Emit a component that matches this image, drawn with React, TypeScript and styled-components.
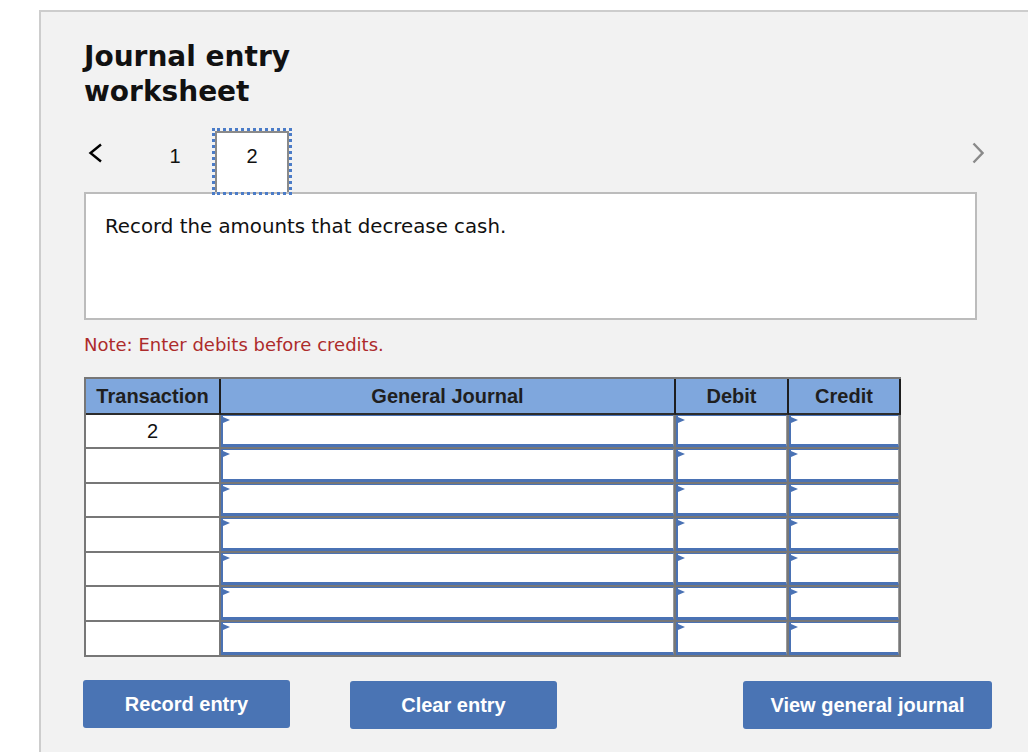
import styled, { createGlobalStyle } from "styled-components";

const GlobalStyle = createGlobalStyle`
    html, body {
        margin: 0;
        background: #ffffff;
        overflow: hidden;
    }
`;

const Panel = styled.div`
    margin: 10px 0 0 39px;
    height: 742px;
    box-sizing: border-box;
    background: #f2f2f2;
    border: 2px solid #cdcdcd;
    border-right: none;
    border-bottom: none;
    padding: 27px 0 0 43px;
    overflow: hidden;
`;

const Content = styled.div`
    width: 893px;
`;

const Title = styled.h1`
    margin: 0;
    width: 240px;
    font: 700 28px/35px "DejaVu Sans", Verdana, sans-serif;
    color: #111;
`;

const TabRow = styled.div`
    display: flex;
    align-items: flex-start;
    height: 61px;
    margin-top: 22px;
`;

const ArrowButton = styled.button<{ $next?: boolean }>`
    display: block;
    background: none;
    border: none;
    padding: ${(p) => (p.$next ? "11px 0 0 0" : "12px 0 0 4px")};
    width: ${(p) => (p.$next ? "12px" : "54px")};
    margin-left: ${(p) => (p.$next ? "auto" : "0")};
    margin-right: ${(p) => (p.$next ? "-7px" : "0")};
    cursor: pointer;
    svg {
        display: block;
    }
`;

const Tab = styled.div<{ $active?: boolean }>`
    position: relative;
    z-index: 1;
    width: 74px;
    height: 61px;
    box-sizing: border-box;
    margin-left: ${(p) => (p.$active ? "3px" : "0")};
    padding-top: 12px;
    border: 2px solid ${(p) => (p.$active ? "#8a8a8a" : "transparent")};
    border-bottom: none;
    background: ${(p) => (p.$active ? "#ffffff" : "transparent")};
    outline: ${(p) => (p.$active ? "3px dotted #4b7cc8" : "none")};
    text-align: center;
    font: 400 20px/22px "Liberation Sans", Arial, sans-serif;
    color: #111;
`;

const Prompt = styled.div`
    height: 128px;
    box-sizing: border-box;
    background: #fff;
    border: 2px solid #bcbcbc;
    padding: 21px 19px;
    font: 400 19.8px/23px "DejaVu Sans", Verdana, sans-serif;
    color: #111;
`;

const Note = styled.p`
    margin: 14px 0 0;
    font: 400 18px/22px "DejaVu Sans", Verdana, sans-serif;
    color: #ad2b2b;
`;

const JournalGrid = styled.div`
    display: grid;
    width: 815px;
    margin-top: 21px;
    grid-template-columns: 135px 455px 113px 112px;
    grid-template-rows: 36px 34px 35px 34px 35px 34px 35px 35px;
    border-top: 2px solid #777;
    border-left: 2px solid #777;
`;

const HeadCell = styled.div`
    display: flex;
    align-items: center;
    justify-content: center;
    box-sizing: border-box;
    background: #7fa7dd;
    border-right: 2px solid #1e1e1e;
    border-bottom: 2px solid #2c2c2c;
    font: 700 20px "Liberation Sans", Arial, sans-serif;
    color: #1f1f1f;
`;

const TxCell = styled.div`
    display: flex;
    align-items: center;
    justify-content: center;
    box-sizing: border-box;
    background: #fff;
    border-right: 2px solid #777;
    border-bottom: 2px solid #777;
    font: 400 20px "Liberation Sans", Arial, sans-serif;
    color: #111;
`;

const EntryCell = styled.div`
    position: relative;
    box-sizing: border-box;
    background: #fff;
    border-right: 2px solid #777;
    border-bottom: 2px solid #777;
`;

const EntryInput = styled.input`
    display: block;
    width: 100%;
    height: 100%;
    box-sizing: border-box;
    margin: 0;
    padding: 0 10px;
    border-style: solid;
    border-width: 1px 1px 3px 2px;
    border-color: #4a72b4 #9a9a9a #4a72b4 #4a72b4;
    background: #fff;
    outline: none;
    font: 400 17px "Liberation Sans", Arial, sans-serif;
`;

const Marker = styled.span`
    position: absolute;
    left: 2px;
    top: 2px;
    width: 0;
    height: 0;
    border-top: 3.5px solid transparent;
    border-bottom: 3.5px solid transparent;
    border-left: 7px solid #4a72b4;
`;

const ButtonRow = styled.div`
    display: flex;
    align-items: flex-start;
    width: 909px;
    margin: 23px 0 0 -1px;
`;

const ActionButton = styled.button<{ $width: number; $gap?: string; $drop?: boolean }>`
    width: ${(p) => p.$width}px;
    height: 48px;
    margin-left: ${(p) => p.$gap ?? "0"};
    margin-top: ${(p) => (p.$drop ? "1px" : "0")};
    padding: 0;
    background: #4a74b4;
    border: none;
    border-radius: 3px;
    color: #fff;
    font: 700 20px "Liberation Sans", Arial, sans-serif;
    cursor: pointer;
`;

const columns = ["Transaction", "General Journal", "Debit", "Credit"];
const rows = ["2", "", "", "", "", "", ""];

function JournalRow({ tx }: { tx: string }) {
    return (
        <>
            <TxCell>{tx}</TxCell>
            {[0, 1, 2].map((i) => (
                <EntryCell key={i}>
                    <EntryInput type="text" />
                    <Marker />
                </EntryCell>
            ))}
        </>
    );
}

export default function App() {
    return (
        <>
            <GlobalStyle />
            <Panel>
                <Content>
                    <Title>Journal entry worksheet</Title>
                    <TabRow>
                        <ArrowButton aria-label="Previous">
                            <svg width="15" height="20" viewBox="0 0 15 20">
                                <path d="M13 1.5 L2.5 10 L13 18.5" fill="none" stroke="#000" strokeWidth="2.4" />
                            </svg>
                        </ArrowButton>
                        <Tab>1</Tab>
                        <Tab $active>2</Tab>
                        <ArrowButton $next aria-label="Next">
                            <svg width="12" height="22" viewBox="0 0 12 22">
                                <path d="M1.5 1.5 L10.5 11 L1.5 20.5" fill="none" stroke="#8a8a8a" strokeWidth="2.4" />
                            </svg>
                        </ArrowButton>
                    </TabRow>
                    <Prompt>Record the amounts that decrease cash.</Prompt>
                    <Note>Note: Enter debits before credits.</Note>
                    <JournalGrid>
                        {columns.map((c) => (
                            <HeadCell key={c}>{c}</HeadCell>
                        ))}
                        {rows.map((tx, i) => (
                            <JournalRow key={i} tx={tx} />
                        ))}
                    </JournalGrid>
                    <ButtonRow>
                        <ActionButton $width={207}>Record entry</ActionButton>
                        <ActionButton $width={207} $gap="60px" $drop>Clear entry</ActionButton>
                        <ActionButton $width={249} $gap="auto" $drop>View general journal</ActionButton>
                    </ButtonRow>
                </Content>
            </Panel>
        </>
    );
}
